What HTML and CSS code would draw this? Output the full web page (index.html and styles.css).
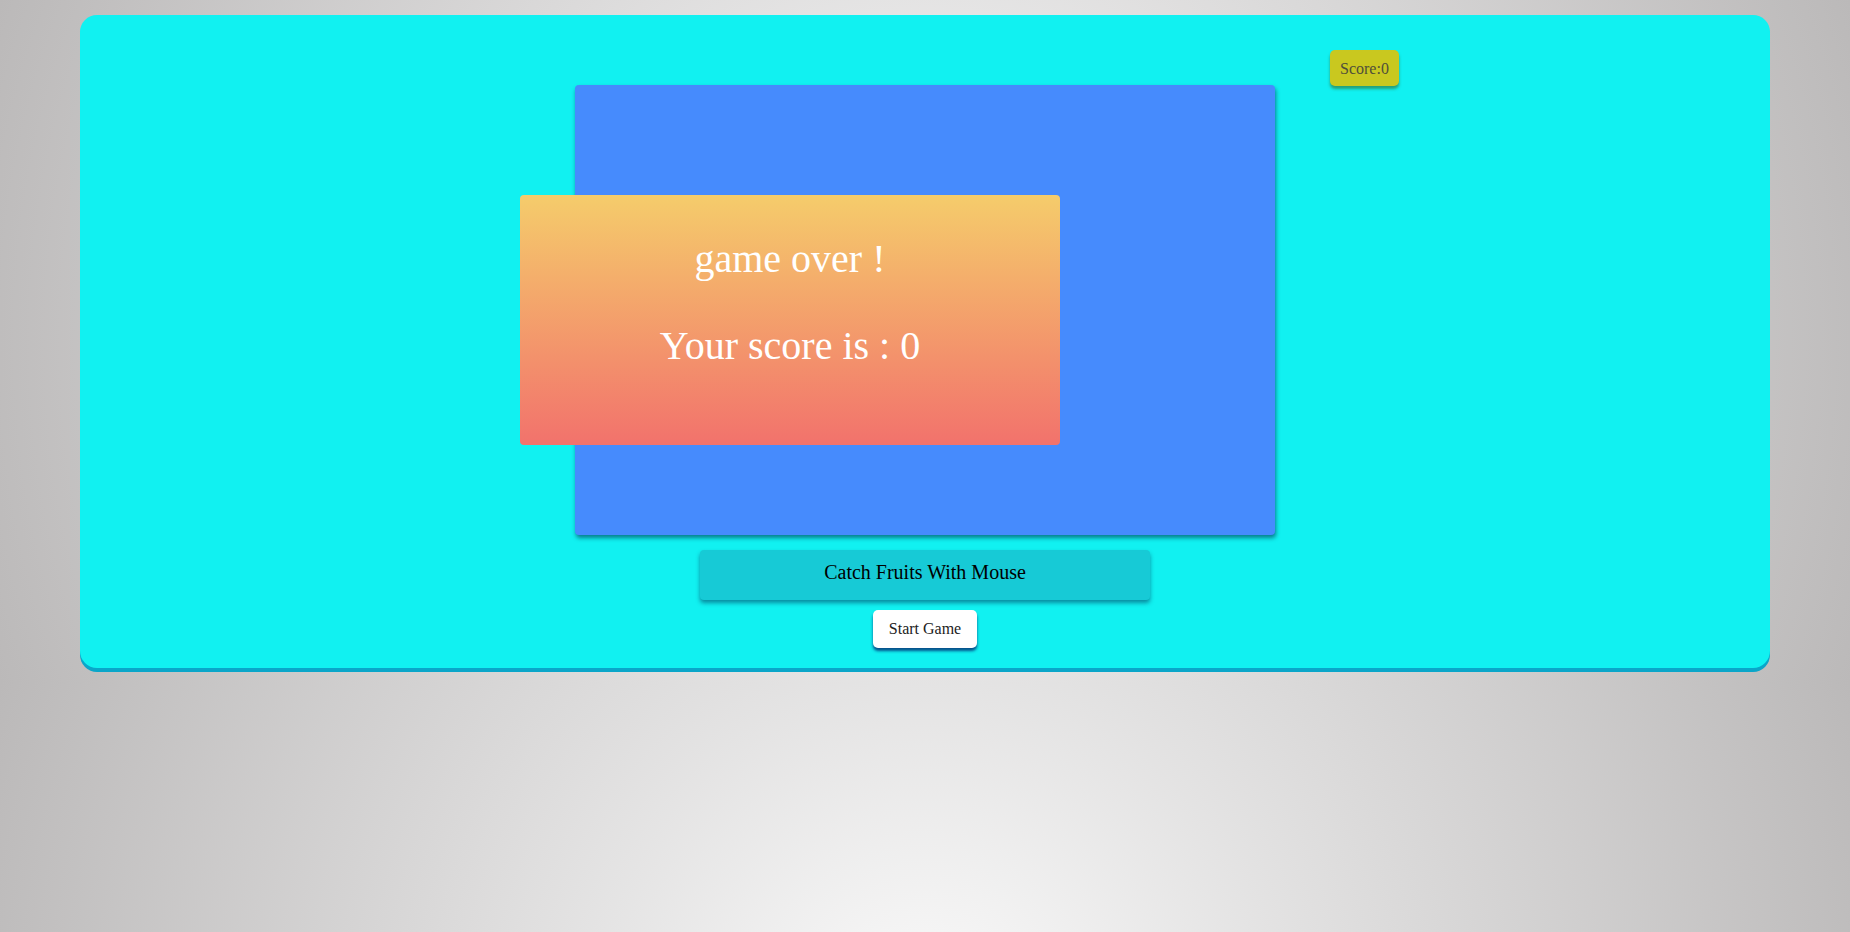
FILE: index.html
```html
<!DOCTYPE html>
<html lang="en">
<head>
<meta charset="utf-8">
<title>Catch Fruits</title>
<link rel="stylesheet" href="styles.css">
</head>
<body>
<main class="game">
  <div class="stage">
    <div class="score">Score:0</div>
    <div class="over">
      <p class="over-title">game over !</p>
      <p class="over-score">Your score is : 0</p>
    </div>
  </div>
  <div class="title">Catch Fruits With Mouse</div>
  <button class="start">Start Game</button>
</main>
</body>
</html>
```
FILE: styles.css
```css
html {
  background-image: radial-gradient(circle farthest-corner at 50% 50%, #fafafa 0%, #bbb9b9 100%);
  background-size: 100% 683px;
  background-repeat: repeat-y;
}
body {
  margin: 0;
  padding: 15px 0 15px;
  font-family: "Liberation Serif", "Times New Roman", serif;
}
.game {
  margin: 0 80px;
  background: #11f1f1;
  border-radius: 17px;
  box-shadow: 0 4px 0 #0aa6c9;
  display: flex;
  flex-direction: column;
  align-items: center;
  padding: 70px 0 20px;
}
.stage {
  position: relative;
  width: 700px;
  height: 450px;
  background: #468bfd;
  border-radius: 4px;
  box-shadow: 1px 3px 4px rgba(0, 30, 60, 0.55);
}
.score {
  position: absolute;
  left: 755px;
  top: -35px;
  padding: 11px 10px 9px;
  font-size: 16px;
  line-height: 16px;
  color: #4f4f3a;
  background: #c9c81f;
  border-radius: 5px;
  box-shadow: 0 3px 3px rgba(60, 80, 0, 0.5);
}
.over {
  position: absolute;
  left: -55px;
  top: 110px;
  width: 540px;
  height: 250px;
  border-radius: 4px;
  background: linear-gradient(#f5cc6b, #f2726c);
  color: #fff;
  text-align: center;
  font-size: 40px;
  line-height: 46px;
}
.over p {
  margin: 0;
}
.over-title {
  padding-top: 41px;
}
.over-score {
  padding-top: 41px;
}
.title {
  margin-top: 15px;
  width: 450px;
  height: 50px;
  box-sizing: border-box;
  padding-top: 11px;
  text-align: center;
  font-size: 20px;
  line-height: 23px;
  color: #000;
  background: #17cad6;
  border-radius: 4px;
  box-shadow: 0 3px 4px rgba(0, 40, 80, 0.5);
}
.start {
  margin-top: 10px;
  font-family: "Liberation Serif", "Times New Roman", serif;
  font-size: 16px;
  line-height: 18px;
  padding: 10px 16px;
  color: #222;
  background: #fff;
  border: none;
  border-radius: 5px;
  box-shadow: 0 3px 3px rgba(5, 50, 120, 0.85);
}
```
